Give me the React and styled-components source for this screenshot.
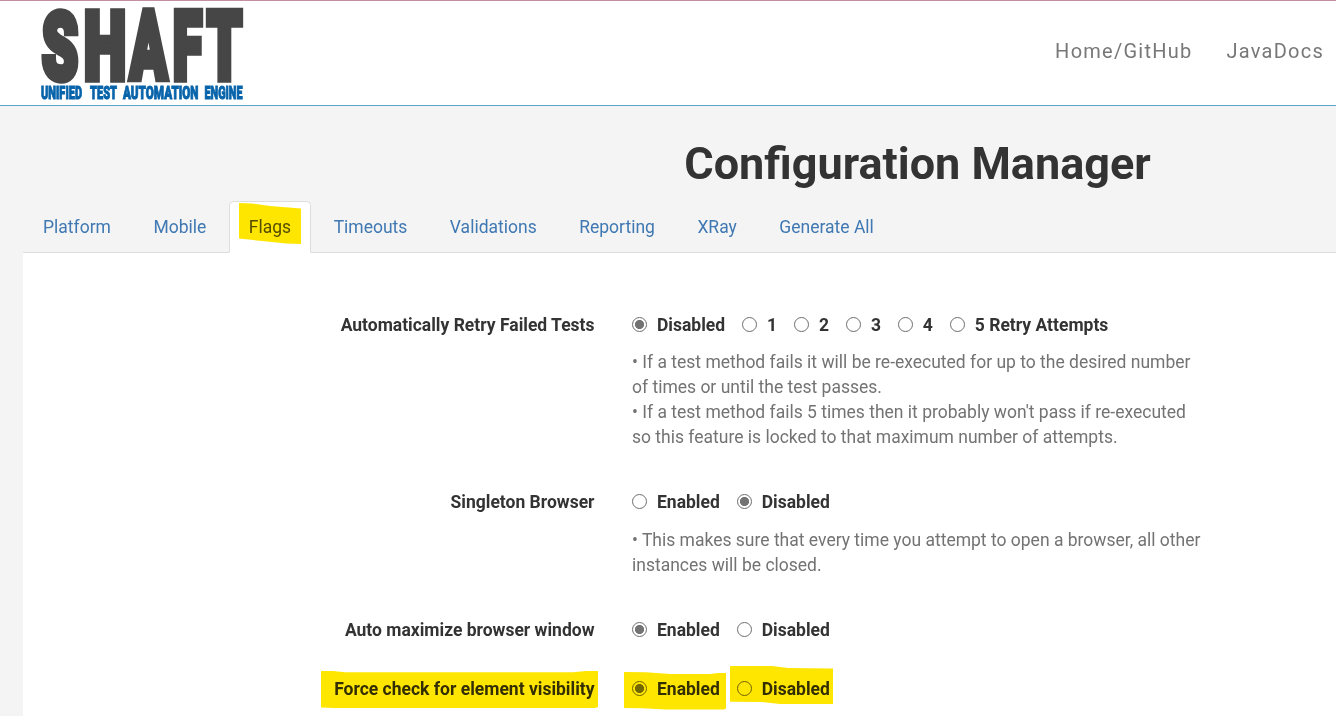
import React from "react";
import styled, { createGlobalStyle } from "styled-components";

const GlobalStyle = createGlobalStyle`
  * { box-sizing: border-box; }
  html, body { margin: 0; height: 716px; overflow: hidden; background: #f4f4f4; }
  body { font-family: Roboto, sans-serif; font-size: 17.5px; line-height: 25px; color: #333; }
`;

const Page = styled.div`
  width: 1336px;
  height: 716px;
  overflow: hidden;
  display: flex;
  flex-direction: column;
`;

const Header = styled.header`
  flex: none;
  height: 106px;
  background: #fff;
  border-top: 1px solid #c58fa3;
  border-bottom: 1px solid #58a6ca;
  display: flex;
  justify-content: space-between;
  padding: 0 12px 0 40px;
`;

const LogoSvg = styled.svg`
  display: block;
  width: 206px;
  height: 104px;
  overflow: visible;
  font-family: Roboto, sans-serif;
  font-weight: 900;
  line-height: 1;
`;

const Nav = styled.nav`
  display: flex;
  gap: 34px;
  padding-top: 37px;
`;

const NavLink = styled.a`
  font-size: 20px;
  line-height: 26px;
  letter-spacing: 1.25px;
  color: #777;
`;

const Main = styled.main`
  flex: none;
  width: 1789px;
  margin-left: 23px;
`;

const Title = styled.h1`
  margin: 0;
  padding-top: 33px;
  height: 95px;
  font-size: 45px;
  line-height: 50px;
  font-weight: 700;
  text-align: center;
`;

const Tabs = styled.div`
  display: flex;
  gap: 3px;
  height: 52px;
  padding-left: 0.3px;
  border-bottom: 1px solid #ddd;
`;

const Tab = styled.a`
  position: relative;
  height: 52px;
  padding: 12.5px 18.75px;
  border: 1px solid ${(p) => (p.$active ? "#ddd" : "transparent")};
  border-bottom-color: ${(p) => (p.$active ? "#fff" : "transparent")};
  border-radius: 5px 5px 0 0;
  background: ${(p) => (p.$active ? "#fff" : "transparent")};
  color: ${(p) => (p.$active ? "#555" : "#3f78b2")};
`;

const Panel = styled.section`
  display: flex;
  flex-direction: column;
  height: 500px;
  padding-top: 60px;
  background: #fff;
`;

const Row = styled.div`
  display: flex;
  gap: 37.5px;
  margin-bottom: ${(p) => p.$gap}px;
`;

const Label = styled.div`
  width: 571.5px;
  display: flex;
  justify-content: flex-end;
  font-weight: 700;
`;

const Marked = styled.span`
  position: relative;
`;

const Choices = styled.div`
  display: flex;
  gap: 16.9px;
`;

const Choice = styled.label`
  position: relative;
  display: flex;
  align-items: center;
  gap: 10px;
  font-weight: 700;
`;

const Radio = styled.span`
  width: 15px;
  height: 15px;
  margin-bottom: 2px;
  border-radius: 50%;
  border: 1px solid #6e6e6e;
  background: ${(p) =>
    p.$on ? "radial-gradient(circle, #737373 4.2px, #fff 4.9px)" : "#fff"};
`;

const Help = styled.p`
  margin: ${(p) => p.$top}px 0 0;
  color: #737373;
  white-space: pre-line;
`;

const Marker = styled.svg`
  position: absolute;
  left: ${(p) => p.$x}px;
  top: ${(p) => p.$y}px;
  fill: #ffe600;
  mix-blend-mode: multiply;
  pointer-events: none;
`;

const marks = {
  tab: { x: 8, y: 0, w: 64, h: 44, d: "M1 1L14 1.500L32 4L63 6.500V42L48 41.500L24 39L1 36.500Z" },
  label: { x: -13, y: -7, w: 278, h: 39, d: "M0 1H12L24 2.300H252L265 1H277V37L274 38H14L0 37.500Z" },
  enabled: { x: -8, y: -6, w: 103, h: 39, d: "M0 1L22 1.300L46 3H86L94 2H102V37.500L100 38.500H42L18 37.200L0 37Z" },
  disabled: { x: -7, y: -12, w: 103, h: 40, d: "M0 1H42L58 3L103 3.500V39L50 39L32 37L0 36.800Z" },
};

function Highlight({ name }) {
  const m = marks[name];
  return (
    <Marker $x={m.x} $y={m.y} width={m.w} height={m.h}>
      <path d={m.d} />
    </Marker>
  );
}

const logoLetters = [
  ["S", 2, 36, 92.5, 77.5],
  ["H", 44, 42, 95, 78],
  ["A", 90, 37, 95, 78],
  ["F", 133, 29, 95, 78],
  ["T", 167, 35, 95, 78],
];
const logoWords = [
  ["UNIFIED", 1, 41], ["TEST", 50, 27], ["AUTOMATION", 83, 75.5], ["ENGINE", 164.5, 38],
];

function Logo() {
  return (
    <LogoSvg viewBox="0 0 206 104">
      <g fill="#464646" stroke="#464646" strokeWidth="7.500">
        {logoLetters.map(([t, x, w, size, y]) => (
          <text key={t} x={x} y={y} fontSize={size} textLength={w} lengthAdjust="spacingAndGlyphs">{t}</text>
        ))}
      </g>
      <g fill="#0864aa" stroke="#0864aa" strokeWidth="1" fontSize="18.500">
        {logoWords.map(([t, x, w]) => (
          <text key={t} x={x} y="98" textLength={w} lengthAdjust="spacingAndGlyphs">{t}</text>
        ))}
      </g>
    </LogoSvg>
  );
}

const tabs = ["Platform", "Mobile", "Flags", "Timeouts", "Validations", "Reporting", "XRay", "Generate All"];

const settings = [
  {
    label: "Automatically Retry Failed Tests",
    options: ["Disabled", "1", "2", "3", "4", "5 Retry Attempts"],
    selected: 0,
    gap: 40,
    helpTop: 11.5,
    help: "• If a test method fails it will be re-executed for up to the desired number\nof times or until the test passes.\n• If a test method fails 5 times then it probably won't pass if re-executed\nso this feature is locked to that maximum number of attempts.",
  },
  {
    label: "Singleton Browser",
    options: ["Enabled", "Disabled"],
    selected: 1,
    gap: 40,
    helpTop: 13.5,
    help: "• This makes sure that every time you attempt to open a browser, all other\ninstances will be closed.",
  },
  { label: "Auto maximize browser window", options: ["Enabled", "Disabled"], selected: 0, gap: 34 },
  {
    label: "Force check for element visibility",
    options: ["Enabled", "Disabled"],
    selected: 0,
    gap: 0,
    marked: true,
  },
];

export default function App() {
  return (
    <Page>
      <GlobalStyle />
      <Header>
        <Logo />
        <Nav>
          <NavLink>Home/GitHub</NavLink>
          <NavLink>JavaDocs</NavLink>
        </Nav>
      </Header>
      <Main>
        <Title>Configuration Manager</Title>
        <Tabs>
          {tabs.map((t) => (
            <Tab key={t} $active={t === "Flags"}>
              {t}
              {t === "Flags" && <Highlight name="tab" />}
            </Tab>
          ))}
        </Tabs>
        <Panel>
          {settings.map((s) => (
            <Row key={s.label} $gap={s.gap}>
              <Label>
                <Marked>
                  {s.label}
                  {s.marked && <Highlight name="label" />}
                </Marked>
              </Label>
              <div>
                <Choices>
                  {s.options.map((o, i) => (
                    <Choice key={o}>
                      <Radio $on={i === s.selected} />
                      {o}
                      {s.marked && <Highlight name={o.toLowerCase()} />}
                    </Choice>
                  ))}
                </Choices>
                {s.help && <Help $top={s.helpTop}>{s.help}</Help>}
              </div>
            </Row>
          ))}
        </Panel>
      </Main>
    </Page>
  );
}
